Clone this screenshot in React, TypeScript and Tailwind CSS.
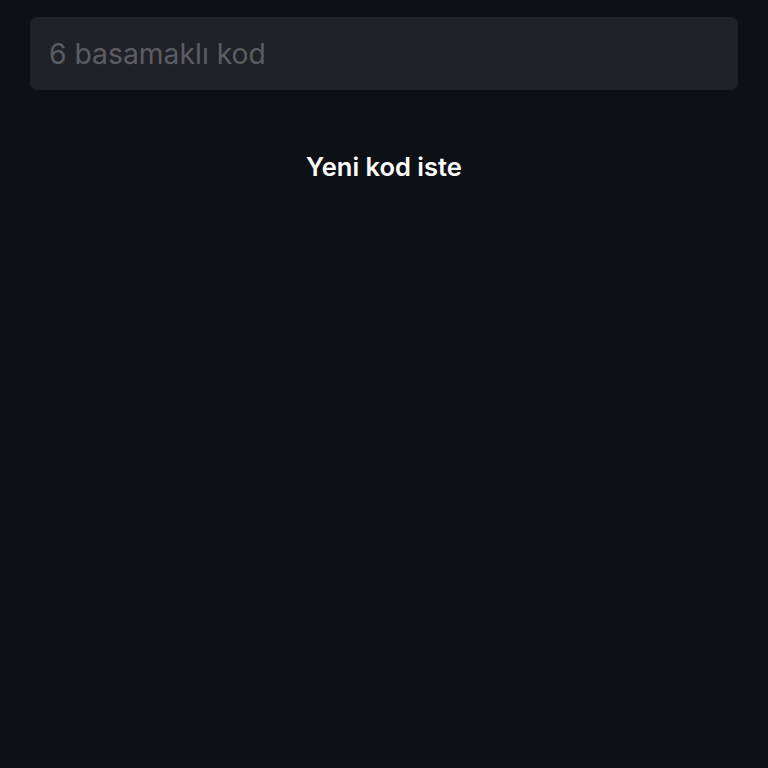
export default function App() {
  return (
    <div className="min-h-[768px] w-full bg-[#0d1015] px-[30px] pt-[17px]" style={{ fontFamily: 'Inter, "Noto Sans", sans-serif' }}>
      <input
        type="text"
        placeholder="6 basamaklı kod"
        className="block h-[73px] w-full rounded-[7px] bg-[#212227] px-[19px] text-[28.3px] text-white outline-none placeholder:text-[#5c5d62]"
      />
      <div className="flex justify-center pt-[59px]">
        <button className="text-[25.5px] font-semibold leading-[36px] text-white">Yeni kod iste</button>
      </div>
    </div>
  );
}
